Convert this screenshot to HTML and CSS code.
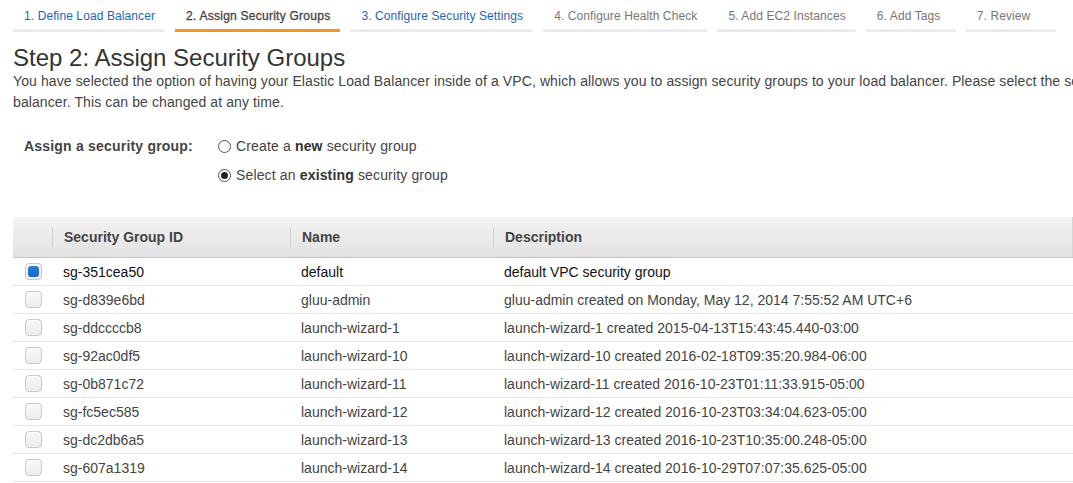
FILE: index.html
```html
<!DOCTYPE html>
<html lang="en">
<head>
<meta charset="utf-8">
<title>Step 2: Assign Security Groups</title>
<link rel="stylesheet" href="styles.css">
</head>
<body>
<nav class="steps">
  <a class="step done">1. Define Load Balancer</a>
  <a class="step active">2. Assign Security Groups</a>
  <a class="step done">3. Configure Security Settings</a>
  <a class="step">4. Configure Health Check</a>
  <a class="step">5. Add EC2 Instances</a>
  <a class="step">6. Add Tags</a>
  <a class="step">7. Review</a>
</nav>
<main class="content">
  <h1 class="title">Step 2: Assign Security Groups</h1>
  <p class="intro">You have selected the option of having your Elastic Load Balancer inside of a VPC, which allows you to assign security groups to your load balancer. Please select the security groups to assign to this load balancer. This can be changed at any time.</p>
  <div class="assign">
    <div class="assign-label">Assign a security group:</div>
    <div class="assign-options">
      <label class="radio"><span class="radio-dot"></span><span class="radio-text">Create a <b>new</b> security group</span></label>
      <label class="radio"><span class="radio-dot checked"></span><span class="radio-text">Select an <b>existing</b> security group</span></label>
    </div>
  </div>
  <table class="sg-table">
    <thead>
      <tr>
        <th class="col-check"></th>
        <th class="col-id"><div class="th-inner">Security Group ID</div></th>
        <th class="col-name"><div class="th-inner">Name</div></th>
        <th class="col-desc"><div class="th-inner">Description</div></th>
      </tr>
    </thead>
    <tbody>
      <tr class="selected"><td class="col-check"><span class="cb checked"></span></td><td>sg-351cea50</td><td>default</td><td>default VPC security group</td></tr>
      <tr><td class="col-check"><span class="cb"></span></td><td>sg-d839e6bd</td><td>gluu-admin</td><td>gluu-admin created on Monday, May 12, 2014 7:55:52 AM UTC+6</td></tr>
      <tr><td class="col-check"><span class="cb"></span></td><td>sg-ddccccb8</td><td>launch-wizard-1</td><td>launch-wizard-1 created 2015-04-13T15:43:45.440-03:00</td></tr>
      <tr><td class="col-check"><span class="cb"></span></td><td>sg-92ac0df5</td><td>launch-wizard-10</td><td>launch-wizard-10 created 2016-02-18T09:35:20.984-06:00</td></tr>
      <tr><td class="col-check"><span class="cb"></span></td><td>sg-0b871c72</td><td>launch-wizard-11</td><td>launch-wizard-11 created 2016-10-23T01:11:33.915-05:00</td></tr>
      <tr><td class="col-check"><span class="cb"></span></td><td>sg-fc5ec585</td><td>launch-wizard-12</td><td>launch-wizard-12 created 2016-10-23T03:34:04.623-05:00</td></tr>
      <tr><td class="col-check"><span class="cb"></span></td><td>sg-dc2db6a5</td><td>launch-wizard-13</td><td>launch-wizard-13 created 2016-10-23T10:35:00.248-05:00</td></tr>
      <tr class="last"><td class="col-check"><span class="cb"></span></td><td>sg-607a1319</td><td>launch-wizard-14</td><td>launch-wizard-14 created 2016-10-29T07:07:35.625-05:00</td></tr>
    </tbody>
  </table>
</main>
</body>
</html>
```
FILE: styles.css
```css
html, body {
  margin: 0;
  padding: 0;
  overflow: hidden;
  background: #fff;
}
body {
  width: 1073px;
  font-family: "Liberation Sans", Arial, sans-serif;
  color: #444;
}

/* wizard steps */
.steps {
  display: flex;
  gap: 10px;
  padding-left: 13px;
}
.step {
  display: block;
  box-sizing: border-box;
  min-width: 90px;
  padding: 9px 10px 6px 11px;
  font-size: 12px;
  line-height: 14px;
  letter-spacing: 0.1px;
  color: #777;
  border-bottom: 3px solid #ececec;
  white-space: nowrap;
}
.step.done { color: #1a66bb; }
.step.active {
  color: #444;
  border-bottom-color: #f7931e;
  -webkit-text-stroke: 0.3px #444;
  letter-spacing: 0.25px;
}

/* content */
.content {
  padding-left: 13px;
}
.title {
  margin: 13px 0 0;
  font-size: 24px;
  line-height: 26px;
  font-weight: normal;
  color: #333;
}
.intro {
  margin: 0;
  width: 1330px;
  font-size: 14px;
  line-height: 21px;
  letter-spacing: 0.1px;
  color: #444;
}

.assign {
  display: flex;
  margin-top: 19px;
  padding-left: 11px;
  font-size: 14px;
  line-height: 29px;
}
.assign-label {
  width: 194px;
  font-weight: bold;
  letter-spacing: 0.2px;
  color: #444;
}
.assign-options {
  display: flex;
  flex-direction: column;
}
.radio {
  display: flex;
  align-items: center;
  color: #444;
}
.radio-text { letter-spacing: 0.15px; }
.radio b { color: #333; }
.radio-dot {
  width: 11px;
  height: 11px;
  border: 1px solid #555;
  border-radius: 50%;
  margin-right: 5px;
  background: #fff;
  display: flex;
  align-items: center;
  justify-content: center;
}
.radio-dot.checked::after {
  content: "";
  width: 7px;
  height: 7px;
  border-radius: 50%;
  background: #222;
}

/* table */
.sg-table {
  margin-top: 27px;
  width: 1060px;
  border-collapse: collapse;
  table-layout: fixed;
  font-size: 14px;
}
.sg-table thead tr {
  background: linear-gradient(#f3f3f3, #e2e2e2);
  border-bottom: 1px solid #c6c6c6;
  border-right: 1px solid #d6d6d6;
}
.sg-table th {
  height: 40px;
  padding: 0;
  text-align: left;
  font-weight: bold;
  color: #444;
}
.th-inner {
  border-left: 1px solid #cfcfcf;
  padding-left: 11px;
  line-height: 20px;
}
.col-check { width: 39px; }
.col-id { width: 238px; }
.col-name { width: 203px; }

.sg-table td {
  height: 27px;
  padding: 0 0 0 11px;
  border-bottom: 1px solid #e4e4e4;
  color: #444;
  white-space: nowrap;
  overflow: hidden;
}
.sg-table td.col-check { padding-left: 12px; }
.sg-table tr.selected td { color: #111; }
.sg-table tr.last td { border-bottom-color: #dfe7ef; }

.cb {
  display: block;
  box-sizing: border-box;
  width: 17px;
  height: 17px;
  border: 1px solid #c9c9c9;
  border-radius: 4px;
  background: linear-gradient(#f9f9f9, #ececec);
  padding: 2px;
}
.cb.checked::after {
  content: "";
  display: block;
  width: 11px;
  height: 11px;
  border-radius: 3px;
  background: linear-gradient(#2f80d8, #1a66c2);
}
```
